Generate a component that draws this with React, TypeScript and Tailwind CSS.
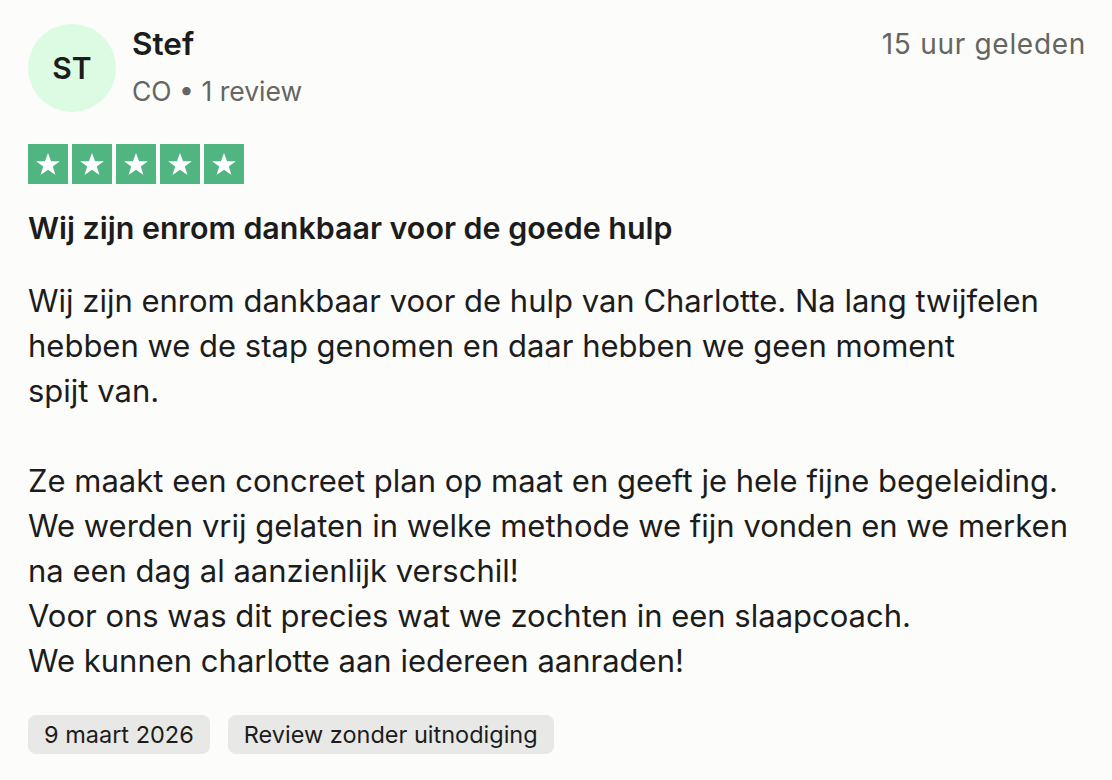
import React from 'react';

function Star() {
    return (
        <div className="w-10 h-10 bg-[#51b582] flex items-center justify-center">
            <svg width="28" height="28" viewBox="0 0 24 24">
                <path d="M12 2.5l2.6 7.2h7.6l-6.1 4.5 2.3 7.3L12 17l-6.4 4.5 2.3-7.3-6.1-4.5h7.6z" fill="#fff"/>
            </svg>
        </div>
    )
}

export default function App() {
    const text = `Wij zijn enrom dankbaar voor de hulp van Charlotte. Na lang twijfelen
hebben we de stap genomen en daar hebben we geen moment
spijt van.

Ze maakt een concreet plan op maat en geeft je hele fijne begeleiding.
We werden vrij gelaten in welke methode we fijn vonden en we merken
na een dag al aanzienlijk verschil!
Voor ons was dit precies wat we zochten in een slaapcoach.
We kunnen charlotte aan iedereen aanraden!`

    return (
        <div className="w-[1112px] h-[780px] bg-[#fcfcfa] text-[#1c1c1c] px-7 pt-6 font-['Inter',sans-serif]">
            <div className="flex items-start justify-between">
                <div className="flex">
                    <div className="w-[88px] h-[88px] rounded-full bg-[#dcfbe3] flex items-center justify-center text-[30px] font-semibold">
                        ST
                    </div>
                    <div className="ml-4">
                        <div className="text-[31.5px] font-semibold leading-[40px]">Stef</div>
                        <div className="text-[26.5px] text-[#656561] leading-[40px] mt-[7px]">CO • 1 review</div>
                    </div>
                </div>
                <div className="text-[28px] text-[#656561] leading-[40px] tracking-wide -mr-[2px]">15 uur geleden</div>
            </div>
            <div className="flex gap-1 mt-8">
                <Star/><Star/><Star/><Star/><Star/>
            </div>
            <h2 className="mt-[24px] text-[30.4px] font-semibold leading-[40px]">Wij zijn enrom dankbaar voor de goede hulp</h2>
            <p className="mt-[30px] text-[31px] leading-[45px] whitespace-pre">{text}</p>
            <div className="flex gap-[18px] mt-[32px]">
                <span className="bg-[#e8e8e6] rounded-lg px-4 h-[39px] flex items-center text-[23.5px]">9 maart 2026</span>
                <span className="bg-[#e8e8e6] rounded-lg px-4 h-[39px] flex items-center text-[23.5px]">Review zonder uitnodiging</span>
            </div>
        </div>
    );
};
